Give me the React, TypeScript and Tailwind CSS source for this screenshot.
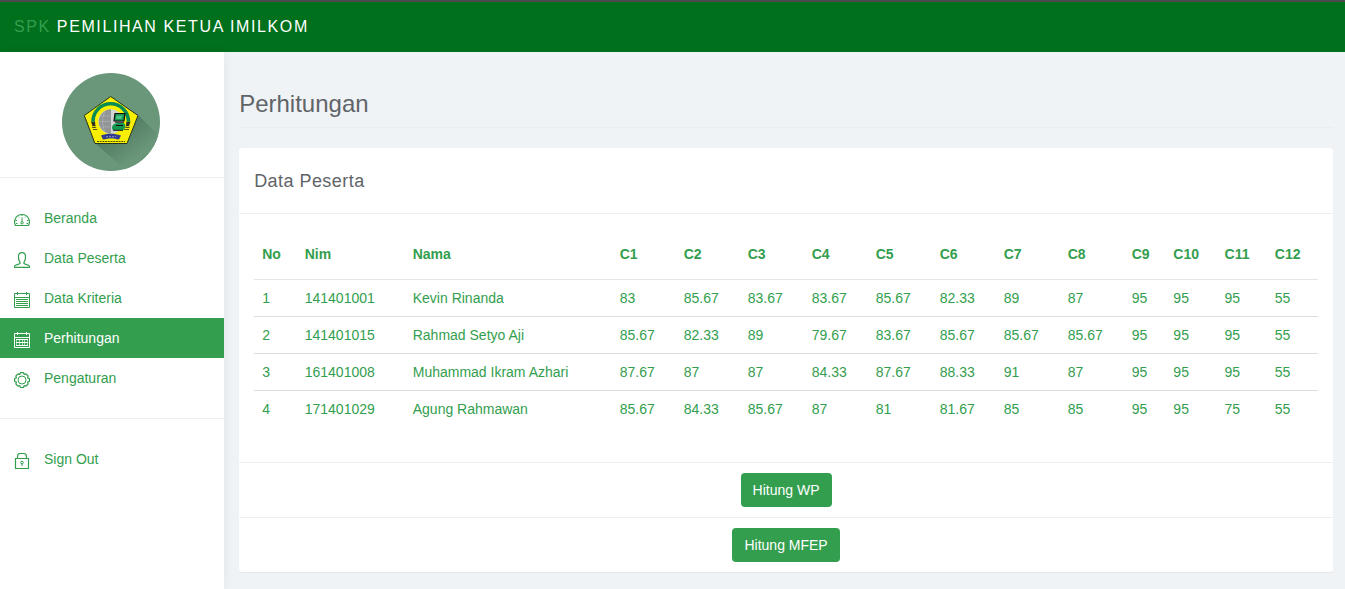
import type { ReactNode } from 'react';

type IconName = 'dashboard' | 'user' | 'notepad' | 'calendar' | 'gear' | 'lock';

const drawings: Record<IconName, ReactNode> = {
  dashboard: (
    <>
      <path d="M1.5 13.5h13c1-2 1.200-4.400.300-6.500C13.600 4 11 2.500 8 2.500S2.400 4 1.200 7C.300 9.100.500 11.500 1.500 13.500Z" strokeWidth="1.200" />
      <path d="M8 2.500v1.500M4 4.500l1 1M12 4.500l-1 1M1.500 8.500H3M13 8.500h1.500M2 11.500h1.500M12.500 11.500H14" />
      <path d="M8 5.500v4" />
      <circle cx="8" cy="10.800" r="1.200" />
    </>
  ),
  user: (
    <path
      d="M.6 15.400V14c0-1 4.400-1.500 5.400-2.500.300-.800 0-1.500-.500-2C4.500 8 4.500 6.500 4.500 4.500 4.500 2 6 .6 8 .6s3.500 1.400 3.500 3.900c0 2 0 3.500-1 5-.500.500-.800 1.200-.500 2 1 1 5.400 1.500 5.400 2.500v1.400H.6Z"
      strokeWidth="1.200"
    />
  ),
  notepad: (
    <>
      <path d="M.5 1.500h15v14H.5ZM.5 5.500h15M3.500 0v3M12.500 0v3" />
      <path d="M2 7.500h12M2 9.500h12M2 11.500h12M2 13.500h12" />
    </>
  ),
  calendar: (
    <>
      <path d="M.5 1.500h15v14H.5ZM.5 5.500h15M3.500 0v3M12.500 0v3" />
      <path d="M2 7.500h12M2 10.500h12M2 13.500h12" />
      <path d="M2.500 7v7M5.500 7v7M8.500 7v7M10.500 7v7M13.500 7v7" strokeOpacity=".6" />
    </>
  ),
  gear: (
    <>
      <path
        d="M6.500.600h3l.600 1.700 1.900-.500 2.100 2.200-.500 1.900 1.800.6v3l-1.800.6.500 1.900-2.100 2.200-1.900-.5-.6 1.800h-3l-.6-1.800-1.900.5L1.900 12l.5-1.900L.6 9.500v-3l1.800-.6L1.900 4 4 1.800l1.900.500Z"
        strokeWidth="1.200"
        strokeLinejoin="round"
      />
      <circle cx="8" cy="8" r="4" />
    </>
  ),
  lock: (
    <>
      <path d="M1.500 5.500h13v10h-13ZM3.500 5.500V3.500c0-2 1-3 3-3h3c2 0 3 1 3 3v2" strokeWidth="1.200" />
      <circle cx="8" cy="9.500" r="1.300" />
      <path d="M8 10.500V13" />
    </>
  ),
};

function Icon({ name }: { name: IconName }) {
  return (
    <span className="pt-1" aria-hidden="true">
      <svg className="size-4" viewBox="0 0 16 16" fill="none" stroke="currentColor">
        {drawings[name]}
      </svg>
    </span>
  );
}

function Logo() {
  return (
    <svg className="size-[98px]" viewBox="0 0 98 98" role="img" aria-label="Logo">
      <defs>
        <linearGradient id="shade" gradientUnits="userSpaceOnUse" x1="50" y1="58" x2="72" y2="86">
          <stop offset="0" stopColor="#4f7a62" />
          <stop offset="1" stopColor="#6a967a" />
        </linearGradient>
        <clipPath id="disc">
          <circle cx="49" cy="49" r="49" />
        </clipPath>
      </defs>
      <circle cx="49" cy="49" r="49" fill="#6a967a" />
      <path d="M76 42l26 26-24 42L33 70Z" fill="url(#shade)" clipPath="url(#disc)" />
      <path d="M48.700 23.500 76 42.500 65 70.500H33L22.300 42.500Z" fill="#f8f000" stroke="#26341c" />
      <path d="M29 48.500H68.500L67 53H30.500Z" fill="#2b2f24" />
      <path d="M30 54.300h37.500M31 56.500h36" stroke="#55581f" strokeWidth="1.200" />
      <path d="M31 48.500a17.700 17.700 0 0 1 35.400 0" fill="none" stroke="#078b55" strokeWidth="3.600" />
      <circle cx="48.700" cy="48.500" r="14" fill="#d3d5d4" stroke="#f8f000" strokeWidth="3.400" />
      <path d="M49 36.300a12.200 12.200 0 0 0 0 24.400Z" fill="#929696" />
      <path d="M37 48.500h11M39 43h9M39 54h9M43 38c-3 7-3 14 0 21" fill="none" stroke="#b4b6b5" strokeWidth=".6" />
      <path d="M53 40.500h10l-1 7.500H52Z" fill="#159750" stroke="#111" strokeWidth="1.200" />
      <path d="m54.500 42.500 6 0-.8 3.500h-5.700Z" fill="#4ac486" />
      <path d="M50 54c1-3 3-4 6-4h5c3 0 3 6 0 7h-9c-2 0-2-1-2-3Z" fill="#159750" />
      <path d="M54 52.500h7M51 57.300h10M53 49.200h9" stroke="#111" />
      <path d="M39 62.500c6-2.500 13-2.500 20 0l-2 4c-6-1.500-10-1.500-16 0Z" fill="#303c91" />
      <path d="M44 63.800h10" stroke="#b4b6d8" strokeWidth=".8" strokeDasharray="2 1" />
      <path d="M35 68.500h28" stroke="#4d5014" strokeDasharray="2 .7" />
    </svg>
  );
}

const links: { label: string; icon: IconName; active?: boolean }[] = [
  { label: 'Beranda', icon: 'dashboard' },
  { label: 'Data Peserta', icon: 'user' },
  { label: 'Data Kriteria', icon: 'notepad' },
  { label: 'Perhitungan', icon: 'calendar', active: true },
  { label: 'Pengaturan', icon: 'gear' },
];

function NavLink({ label, icon, active }: { label: string; icon: IconName; active?: boolean }) {
  return (
    <a
      href="#"
      aria-current={active ? 'page' : undefined}
      className={
        active
          ? 'flex h-10 items-center gap-3.5 bg-[#339e4e] px-3.5 text-white'
          : 'flex h-10 items-center gap-3.5 px-3.5'
      }
    >
      <Icon name={icon} />
      {label}
    </a>
  );
}

const columns = [
  { heading: 'No', className: 'px-2' },
  { heading: 'Nim', className: 'w-[108px] px-2' },
  { heading: 'Nama', className: 'w-[207px] px-2' },
  { heading: 'C1', className: 'w-16 px-2' },
  { heading: 'C2', className: 'w-16 px-2' },
  { heading: 'C3', className: 'w-16 px-2' },
  { heading: 'C4', className: 'w-16 px-2' },
  { heading: 'C5', className: 'w-16 px-2' },
  { heading: 'C6', className: 'w-16 px-2' },
  { heading: 'C7', className: 'w-16 px-2' },
  { heading: 'C8', className: 'w-16 px-2' },
  { heading: 'C9', className: 'px-2' },
  { heading: 'C10', className: 'px-2' },
  { heading: 'C11', className: 'px-2' },
  { heading: 'C12', className: 'px-2' },
];

const rows = [
  ['1', '141401001', 'Kevin Rinanda', '83', '85.67', '83.67', '83.67', '85.67', '82.33', '89', '87', '95', '95', '95', '55'],
  ['2', '141401015', 'Rahmad Setyo Aji', '85.67', '82.33', '89', '79.67', '83.67', '85.67', '85.67', '85.67', '95', '95', '95', '55'],
  ['3', '161401008', 'Muhammad Ikram Azhari', '87.67', '87', '87', '84.33', '87.67', '88.33', '91', '87', '95', '95', '95', '55'],
  ['4', '171401029', 'Agung Rahmawan', '85.67', '84.33', '85.67', '87', '81', '81.67', '85', '85', '95', '95', '75', '55'],
];

export default function App() {
  return (
    <div className="flex min-h-screen flex-col bg-[#f0f3f6] font-['Liberation_Sans',Arial,sans-serif] text-sm text-[#339e4e]">
      <header className="flex h-[52px] items-center border-t-2 border-[#4b4b4b] bg-[#00701d] px-3.5">
        <a href="#" className="text-base tracking-widest text-white">
          <span className="text-[#339e4e]">SPK</span> PEMILIHAN KETUA IMILKOM
        </a>
      </header>
      <div className="flex flex-1">
        <aside className="w-1/6 shrink-0 bg-white shadow-[1px_0_10px_rgba(0,0,0,0.05)]">
          <div className="flex justify-center border-b border-[#eeeeee] pt-[21px] pr-0.5 pb-1.5">
            <Logo />
          </div>
          <nav>
            <div className="py-5">
              {links.map((link) => (
                <NavLink key={link.label} {...link} />
              ))}
            </div>
            <div className="border-t border-[#eeeeee] py-5">
              <NavLink label="Sign Out" icon="lock" />
            </div>
          </nav>
        </aside>
        <main className="min-w-0 flex-1 pt-9 pr-3 pb-4 pl-[15px]">
          <h1 className="border-b border-[#e9edf1] pb-[7px] text-2xl text-[#5f6468]">Perhitungan</h1>
          <section className="mt-5 rounded-sm border-b border-[#e5e8eb] bg-white">
            <h2 className="border-b border-[#eeeeee] px-[15px] pt-[19px] pb-[18px] text-lg tracking-wide text-[#5f6468]">Data Peserta</h2>
            <div className="px-[15px] pt-[15px] pb-[35px]">
              <table className="w-full text-left">
                <thead>
                  <tr className="h-[50px] border-b border-[#e5e5e5]">
                    {columns.map((column) => (
                      <th key={column.heading} scope="col" className={column.className}>{column.heading}</th>
                    ))}
                  </tr>
                </thead>
                <tbody>
                  {rows.map((row) => (
                    <tr key={row[0]} className="border-b border-[#dddddd] last:border-b-0">
                      {row.map((cell, index) => (
                        <td key={columns[index].heading} className="p-2">{cell}</td>
                      ))}
                    </tr>
                  ))}
                </tbody>
              </table>
            </div>
            <div className="flex justify-center border-t border-[#eeeeee] py-2.5">
              <button type="button" className="rounded bg-[#339e4e] px-3 py-[7px] text-white">Hitung WP</button>
            </div>
            <div className="flex justify-center border-t border-[#eeeeee] py-2.5">
              <button type="button" className="rounded bg-[#339e4e] px-3 py-[7px] text-white">Hitung MFEP</button>
            </div>
          </section>
        </main>
      </div>
    </div>
  );
}
